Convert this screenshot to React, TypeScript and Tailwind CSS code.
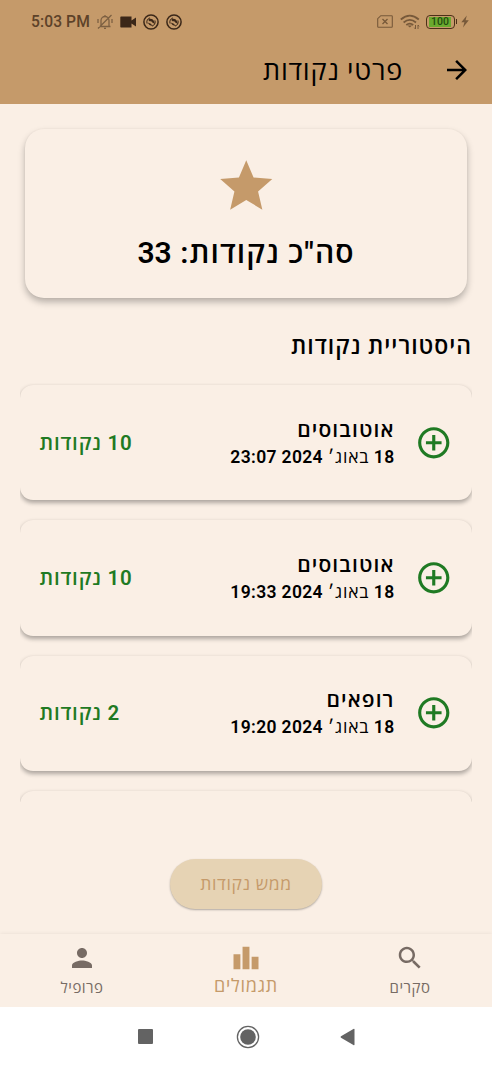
import type { ReactNode } from "react";

type Entry = { title: string; day: string; month: string; time: string; points: string };

const entries: Entry[] = [
  { title: "אוטובוסים", day: "18", month: "באוג׳", time: "2024 23:07", points: "10" },
  { title: "אוטובוסים", day: "18", month: "באוג׳", time: "2024 19:33", points: "10" },
  { title: "רופאים", day: "18", month: "באוג׳", time: "2024 19:20", points: "2" },
];

function Icon({ d, className }: { d: string; className: string }) {
  return (
    <svg viewBox="0 0 24 24" fill="currentColor" className={className}>
      <path d={d} />
    </svg>
  );
}

function SwirlBadge() {
  return (
    <svg viewBox="0 0 16 16" className="size-4 text-[#3b2718]" fill="none" stroke="currentColor">
      <circle cx="8" cy="8" r="7.1" strokeWidth="1.5" />
      <path d="M4.1 9.6A4.3 4.3 0 0 1 7 3.9M11.9 6.4A4.3 4.3 0 0 1 9 12.1" strokeWidth="1" />
      <path d="M5.2 5.8C6.8 4 9.6 4.4 10.8 6.8L12 9.9 9.6 8.8 8.2 7.2 6.4 7.2Z" fill="currentColor" stroke="none" />
      <path d="M4.6 8.6 7.4 9.4 9.6 11.6Q6.6 12.4 4.6 8.6Z" fill="currentColor" stroke="none" />
    </svg>
  );
}

function StatusBar() {
  return (
    <div dir="ltr" className="flex h-[43px] items-center pl-[31px] pr-[23px] text-[#5d4229]">
      <span className="w-[66px] whitespace-nowrap pt-[2px] text-[15.6px] font-medium tracking-[0.1px]">5:03 PM</span>
      <svg viewBox="0 0 16 16" className="size-4 text-[#7d6042]" fill="none" stroke="currentColor" strokeWidth="1.3">
        <path d="M2.5 12.5h11M4 12V6.5a4 4 0 0 1 8 0V12M7 14.3h2M8 2.5V1M1 14.5 14.5 1M1 5v4M15 5v4" />
      </svg>
      <svg viewBox="0 0 17 12" className="ml-[7px] h-3 w-[17px] text-[#3b2718]" fill="currentColor">
        <path d="M1 .5h10.5v4L16 1.5v9l-4.5-3v4H1Q.3 11.5.3 10.8V1.2Q.3.5 1 .5z" />
      </svg>
      <div className="ml-[6px] flex gap-[7px]">
        <SwirlBadge />
        <SwirlBadge />
      </div>
      <div className="flex-1" />
      <svg viewBox="0 0 16 13" className="h-[13px] w-4 text-[#77593a]" fill="none" stroke="currentColor">
        <path d="M3.8.7h10.8q.7 0 .7.7v10.2q0 .7-.7.7H1.4q-.7 0-.7-.7V3.7z" strokeWidth="1.1" />
        <path d="m5.5 4 5 5m0-5-5 5" strokeWidth="1.3" />
      </svg>
      <svg viewBox="0 0 20 16" className="ml-[7px] h-4 w-5 text-[#77593a]" fill="none" stroke="currentColor" strokeWidth="1.8">
        <path d="M.8 5.5Q9.8-2.2 18.8 5.5M3.6 8.5Q9.8 3.3 16 8.5M6.3 11Q9.8 8.3 13.2 11" />
        <path d="m7.5 11.5 2.3 2 2.3-2z" fill="currentColor" stroke="none" />
        <path d="M15.5 11v4m-1.2-1.3 1.2 1.3M18 15v-4m0 0 1.2 1.3" strokeWidth="1" />
      </svg>
      <div className="ml-[6px] flex h-[14px] w-[29px] items-center justify-center rounded-[4px] border-[1.5px] border-[#4b3018] px-[2.5px] py-[1px]">
        <span className="flex h-full w-full items-center justify-center bg-[#6aaa2e] pt-[2px] text-[10.5px] font-medium leading-none text-[#234b10]">100</span>
      </div>
      <div className="ml-px h-[5px] w-[1.5px] bg-[#4b3018]" />
      <svg viewBox="0 0 8 13" className="ml-[4px] h-[13px] w-2 text-[#77593a]" fill="currentColor">
        <path d="M5.8.5.3 7.3h3.1L2 12.5l5.8-7.3H4.6z" />
      </svg>
    </div>
  );
}

function HistoryCard({ entry }: { entry: Entry }) {
  return (
    <article className="flex h-[115.3px] shrink-0 items-center rounded-[13px] bg-[#faefe5] pl-[19.5px] pr-[20px] shadow-[0_2.5px_4px_rgba(0,0,0,0.3),0_0_1px_rgba(0,0,0,0.05)]">
      <Icon
        className="size-[37.5px] text-[#1f7a23]"
        d="M13 7h-2v4H7v2h4v4h2v-4h4v-2h-4V7zm-1-5C6.48 2 2 6.48 2 12s4.48 10 10 10 10-4.48 10-10S17.52 2 12 2zm0 18c-4.41 0-8-3.59-8-8s3.59-8 8-8 8 3.59 8 8-3.59 8-8 8z"
      />
      <div className="mr-[20px] flex-1 pt-px">
        <h3 className="text-[21px] font-semibold leading-[28px] tracking-[1.1px]">{entry.title}</h3>
        <p className="text-[17.5px] font-semibold leading-[27px] tracking-[0.35px]">
          {entry.day} <span className="font-normal tracking-[0.75px]">{entry.month}</span> {entry.time}
        </p>
      </div>
      <span className="pt-px text-[20.5px] font-semibold tracking-[0.8px] text-[#1f7a23]">{entry.points} נקודות</span>
    </article>
  );
}

function Tab({ label, active, children }: { label: string; active?: boolean; children: ReactNode }) {
  return (
    <button
      className={
        active
          ? "flex flex-1 flex-col items-center pt-[9px] text-[18px] leading-[26px] tracking-[0.75px] text-[#c59a6a]"
          : "flex flex-1 flex-col items-center pt-[9px] text-[15px] leading-[30px] tracking-[0.5px] text-[#776b64]"
      }
    >
      {children}
      <span>{label}</span>
    </button>
  );
}

export default function App() {
  return (
    <div dir="rtl" className="flex h-[1066px] w-[492px] flex-col overflow-hidden bg-[#faefe5] font-[Roboto,'Open_Sans',sans-serif] text-black">
      <header className="h-[104px] shrink-0 bg-[#c59a6a]">
        <StatusBar />
        <div className="flex h-[53px] items-center pr-5">
          <Icon className="size-[30px]" d="M12 4l-1.41 1.41L16.17 11H4v2h12.17l-5.58 5.59L12 20l8-8z" />
          <h1 className="mr-[39px] pt-[4px] text-[27px] leading-none tracking-[0.75px]">פרטי נקודות</h1>
        </div>
      </header>

      <main className="flex flex-1 flex-col">
        <section className="mx-[25px] mt-[25px] flex h-[169px] shrink-0 flex-col items-center rounded-[19px] bg-[#faefe5] pt-[26px] shadow-[0_4px_7px_rgba(0,0,0,0.27),0_0_2px_rgba(0,0,0,0.05)]">
          <Icon className="size-[62.5px] text-[#c59a6a]" d="M12 17.27L18.18 21l-1.64-7.03L22 9.24l-7.19-.61L12 2 9.19 8.63 2 9.24l5.46 4.73L5.82 21z" />
          <p className="mt-[15px] text-[30px] font-semibold leading-[40px] tracking-[1.05px]">
            סה"כ נקודות: <span className="tracking-normal">33</span>
          </p>
        </section>
        <h2 className="mr-5 mt-[34px] text-[23px] font-semibold leading-[30px] tracking-[0.97px]">היסטוריית נקודות</h2>
        <div className="mx-5 mt-[21px] flex h-[419px] shrink-0 flex-col gap-5 overflow-hidden pt-[2px]">
          {entries.map((entry) => (
            <HistoryCard key={entry.time} entry={entry} />
          ))}
          <div className="h-[115px] shrink-0 rounded-[13px] bg-[#faefe5] shadow-[0_2.5px_4px_rgba(0,0,0,0.3),0_0_1px_rgba(0,0,0,0.05)]" />
        </div>
        <button className="mx-auto mt-[57px] h-[50px] w-[152px] shrink-0 rounded-full bg-[#e6d3b4] text-[17.5px] tracking-[0.65px] text-[#c59a6a] shadow-[0_1px_2px_rgba(0,0,0,0.3)]">
          ממש נקודות
        </button>
      </main>

      <nav className="flex h-[73px] shrink-0 shadow-[0_0_4px_rgba(0,0,0,0.08)]">
        <Tab label="סקרים">
          <Icon className="size-[30px]" d="M15.5 14h-.79l-.28-.27C15.41 12.59 16 11.11 16 9.5 16 5.91 13.09 3 9.5 3S3 5.91 3 9.5 5.91 16 9.5 16c1.61 0 3.09-.59 4.23-1.57l.27.28v.79l5 4.99L20.49 19l-4.99-5zm-6 0C7.01 14 5 11.99 5 9.5S7.01 5 9.5 5 14 7.01 14 9.5 11.99 14 9.5 14z" />
        </Tab>
        <Tab label="תגמולים" active>
          <Icon className="size-[30px]" d="M7.5 21H2V9h5.5v12zm7.25-18h-5.5v18h5.5V3zM22 11h-5.5v10H22V11z" />
        </Tab>
        <Tab label="פרופיל">
          <Icon className="size-[30px]" d="M12 12c2.21 0 4-1.79 4-4s-1.79-4-4-4-4 1.79-4 4 1.79 4 4 4zm0 2c-2.67 0-8 1.34-8 4v2h16v-2c0-2.66-5.33-4-8-4z" />
        </Tab>
      </nav>

      <div dir="ltr" className="flex h-[59px] shrink-0 items-center bg-white pl-[138px] text-[#636363]">
        <div className="size-[15px] rounded-[1px] bg-[#636363]" />
        <svg viewBox="0 0 24 24" className="ml-[82.5px] size-6" fill="none" stroke="currentColor">
          <circle cx="12" cy="12" r="10.6" strokeWidth="1.3" />
          <circle cx="12" cy="12" r="7.8" fill="currentColor" stroke="none" />
        </svg>
        <svg viewBox="0 0 15 18" className="ml-[80px] h-[18px] w-[15px]" fill="currentColor">
          <path d="M13.4.9Q14.5.3 14.5 1.5v15q0 1.2-1.1.6L1 9.8Q0 9 1 8.2z" />
        </svg>
      </div>
    </div>
  );
}
